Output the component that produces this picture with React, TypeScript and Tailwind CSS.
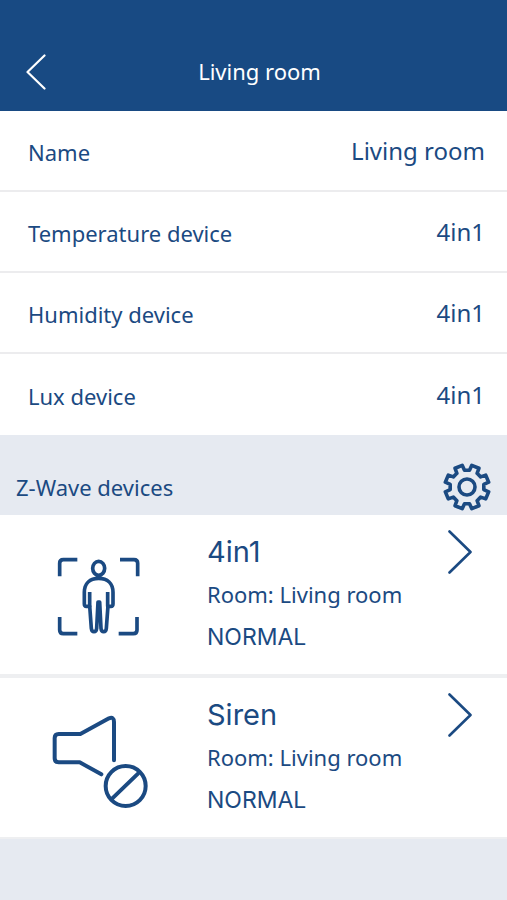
import React from 'react';

interface RoomField {
  label: string;
  value: string;
}

interface Device {
  name: string;
  room: string;
  status: string;
  icon: React.ReactNode;
}

const ChevronLeft = () => (
  <svg viewBox="0 0 20 36" className="h-9 w-5" fill="none" stroke="currentColor" strokeWidth="2.2" strokeLinecap="round" strokeLinejoin="round" aria-hidden="true">
    <path d="M18.5 1.5L1.5 18l17 16.5" />
  </svg>
);

const ChevronRight = () => (
  <svg viewBox="0 0 24 44" className="h-11 w-6" fill="none" stroke="currentColor" strokeWidth="2.6" strokeLinecap="round" strokeLinejoin="round" aria-hidden="true">
    <path d="M1.5 1.5L22.5 22l-21 20.5" />
  </svg>
);

// Eight teeth, each given by its two base corners and two tip corners
const gearPoints = Array.from({ length: 8 }, (_, i) => 22.5 + i * 45)
  .flatMap((deg) => [[-14, 17], [-10, 22.2], [10, 22.2], [14, 17]].map(([offset, radius]) => {
    const angle = ((deg + offset) * Math.PI) / 180;
    return `${(24 + radius * Math.sin(angle)).toFixed(2)},${(24 - radius * Math.cos(angle)).toFixed(2)}`;
  }))
  .join(' ');

const GearIcon = () => (
  <svg viewBox="0 0 48 48" className="h-12 w-12" fill="none" stroke="currentColor" strokeWidth="3.6" strokeLinejoin="round" aria-hidden="true">
    <polygon points={gearPoints} />
    <circle cx="24" cy="24" r="8" />
  </svg>
);

const MotionIcon = () => (
  <svg viewBox="30 32 294 282" className="h-[94px] w-[98px]" fill="none" stroke="currentColor" strokeWidth="11" strokeLinejoin="round" aria-hidden="true">
    <path d="M59 108V69q0-11 11-11h42M240 58h42q11 0 11 11v39M59 230v39q0 11 11 11h42M236 280h44q11 0 11-11v-39" />
    <ellipse cx="176" cy="84" rx="18" ry="21" />
    <path d="M149 155v43h-10q-6 0-6-7v-35c0-27 17-42 43-42s43 15 43 42v35q0 7-6 7h-10v-43" />
    <path d="M149 196l5 68q1 10 8 10t8-10l4-79h5l4 79q1 10 8 10t8-10l5-68" />
    <path d="M176 188v52" strokeWidth="5" />
  </svg>
);

const SirenOffIcon = () => (
  <svg viewBox="30 42 294 282" className="h-[94px] w-[98px]" fill="none" stroke="currentColor" strokeWidth="12" strokeLinecap="round" strokeLinejoin="round" aria-hidden="true">
    <path d="M222 181V66q0-17-15-11l-86 47H56q-12 0-12 12v61q0 12 12 12h63l65 36" />
    <circle cx="257" cy="258" r="60" />
    <path d="M217 295l77-74" />
  </svg>
);

const fields: RoomField[] = [
  { label: 'Name', value: 'Living room' },
  { label: 'Temperature device', value: '4in1' },
  { label: 'Humidity device', value: '4in1' },
  { label: 'Lux device', value: '4in1' },
];

const devices: Device[] = [
  { name: '4in1', room: 'Living room', status: 'NORMAL', icon: <MotionIcon /> },
  { name: 'Siren', room: 'Living room', status: 'NORMAL', icon: <SirenOffIcon /> },
];

const DeviceRow: React.FC<{ device: Device }> = ({ device }) => (
  <li className="border-b-4 border-[#eeeff1] bg-white last:border-b-2">
    <a href="#" className="flex min-h-[159px] items-start pr-[35px]">
      <span className="flex w-[197px] shrink-0 justify-center pt-9">{device.icon}</span>
      <span className="flex-1 pt-[15px] pl-[10px]">
        <span className="block font-['Inter',sans-serif] text-[29px] leading-[43px]">{device.name}</span>
        <span className="block text-[22px] leading-[43px]">Room: {device.room}</span>
        <span className="block font-['Inter',sans-serif] text-[23px] leading-[43px]">{device.status}</span>
      </span>
      <span className="pt-[15px]"><ChevronRight /></span>
    </a>
  </li>
);

export default function App() {
  return (
    <div className="min-h-screen bg-[#e6eaf1] font-['Noto_Sans',sans-serif] text-[#1b4a82]">
      <header className="flex min-h-[111px] items-center bg-[#184a83] pt-8 text-white">
        <button type="button" aria-label="Back" className="flex w-[60px] pl-[26px]">
          <ChevronLeft />
        </button>
        <h1 className="flex-1 pr-12 text-center text-[22px]">Living room</h1>
      </header>

      <dl className="bg-white">
        {fields.map((field) => (
          <div key={field.label} className="flex min-h-[81px] items-center justify-between border-b-2 border-[#ececee] pr-[22px] pl-7 last:border-b-0">
            <dt className="pt-1 text-[22px]">{field.label}</dt>
            <dd className="text-[24px]">{field.value}</dd>
          </div>
        ))}
      </dl>

      <section>
        <div className="flex items-center justify-between pt-7 pr-4 pb-1 pl-4">
          <h2 className="text-[22px]">Z-Wave devices</h2>
          <button type="button" aria-label="Device settings">
            <GearIcon />
          </button>
        </div>
        <ul>
          {devices.map((device) => (
            <DeviceRow key={device.name} device={device} />
          ))}
        </ul>
      </section>
    </div>
  );
}
